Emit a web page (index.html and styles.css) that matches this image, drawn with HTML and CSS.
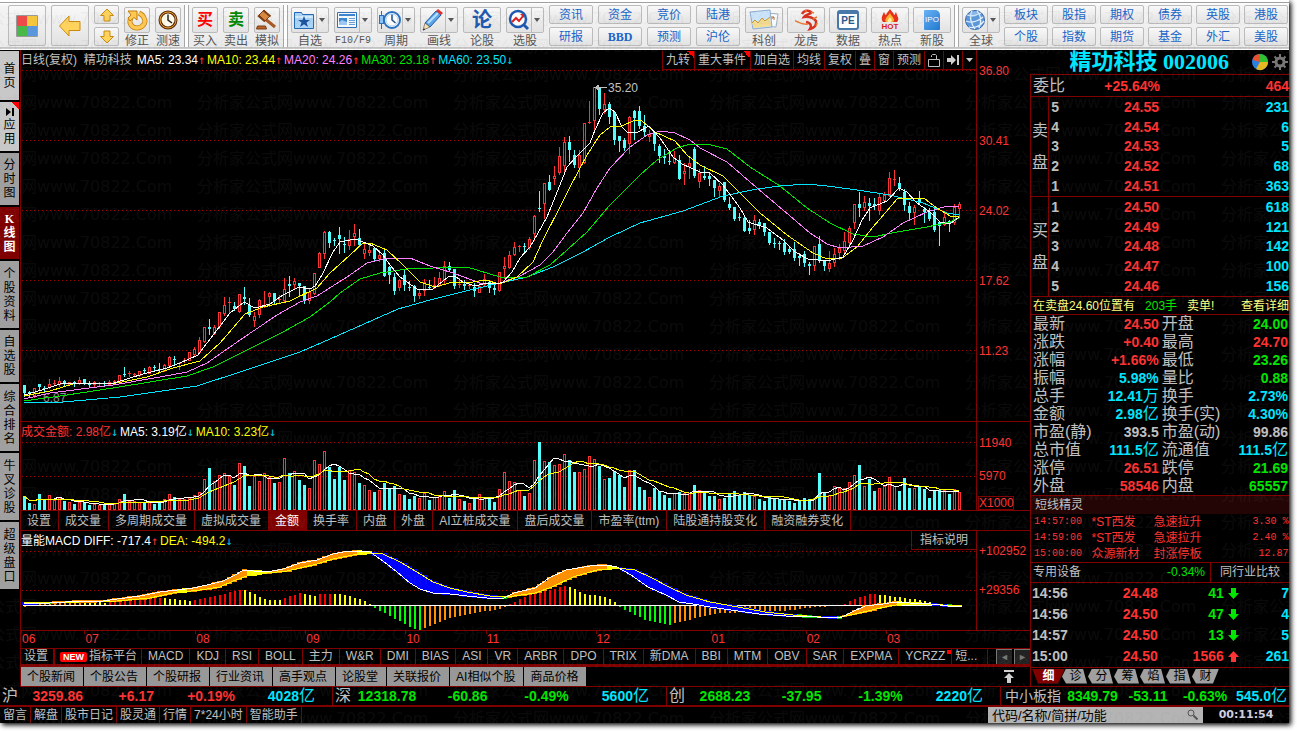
FILE: index.html
```html
<!DOCTYPE html>
<html lang="zh-CN">
<head>
    <meta charset="UTF-8">
    <meta name="viewport" content="width=device-width, initial-scale=1.0">
    <title>精功科技 002006</title>
    <link rel="stylesheet" href="styles.css">
</head>
<body>
<div class="app">
    <!-- Toolbar -->
    <header class="toolbar">
        <div class="group">
            <button class="big" aria-label="菜单"><svg width="24" height="24" viewBox="0 0 24 24"><path fill="#fff" stroke="#999" d="M1.500 1.500h21v21h-21z"/><path fill="#f04848" d="M2 2h10v10H2z"/><path fill="#f8c83c" d="M12 2h10v10H12z"/><path fill="#48b848" d="M2 12h10v10H2z"/><path fill="#5a96dc" d="M12 12h10v10H12z"/></svg></button>
            <button class="big" aria-label="返回"><svg width="24" height="24" viewBox="0 0 24 24"><path fill="#ffd35c" stroke="#c98a10" stroke-linejoin="round" d="M1.500 12 11 2v5.500h11v9H11V22z"/></svg></button>
            <div class="stack">
                <button class="small" aria-label="上"><svg width="16" height="14" viewBox="0 0 16 14"><path fill="#ffd35c" stroke="#c98a10" d="M8 1 14.500 7.500h-3.500V13H5V7.500H1.500z"/></svg></button>
                <button class="small" aria-label="下"><svg width="16" height="14" viewBox="0 0 16 14"><path fill="#ffd35c" stroke="#c98a10" d="M8 13 1.500 6.500H5V1h6v5.500h3.500z"/></svg></button>
            </div>
            <button class="tool narrow"><span class="face"><svg width="22" height="22" viewBox="0 0 22 22"><path fill="none" stroke="#c07c10" stroke-width="5" d="M5 9c-3 5 1 10 6 10s10-5 7-10c-1-3-3-4-5-5"/><path fill="none" stroke="#ffc850" stroke-width="3.500" d="M5 9c-3 5 1 10 6 10s10-5 7-10c-1-3-3-4-5-5"/><path fill="#ffc850" stroke="#c07c10" d="M2 2h9v9L8 8.500 4 12 2 9l3-3z"/></svg></span><span>修正</span></button>
            <button class="tool narrow"><span class="face"><svg width="20" height="20" viewBox="0 0 20 20"><circle cx="10" cy="10" r="8" fill="#fffbe8" stroke="#5a2c08" stroke-width="3"/><circle cx="10" cy="10" r="8" fill="none" stroke="#f0a030"/><path fill="none" stroke="#222" stroke-width="1.500" d="M10 4.500V10l4 3"/></svg></span><span>测速</span></button>
        </div>
        <i class="sep"></i>
        <div class="group">
            <button class="tool narrow"><span class="face glyph buy">买</span><span>买入</span></button>
            <button class="tool narrow"><span class="face glyph sell">卖</span><span>卖出</span></button>
            <button class="tool narrow"><span class="face"><svg width="22" height="22" viewBox="0 0 22 22"><path stroke="#a85820" stroke-width="3" d="m8 9 11 9"/><path fill="#d88840" stroke="#7c3c10" d="m8 1 6 6-5 5-6-6z"/><path stroke="#7c3c10" stroke-width="2" d="m7.500 1.500 7 6M2 6.500l7 6"/><path fill="#b86428" stroke="#7c3c10" d="M1.500 17h8l1 3h-10z"/></svg></span><span>模拟</span></button>
        </div>
        <i class="sep"></i>
        <div class="group">
            <button class="tool"><span class="face drop"><svg width="22" height="22" viewBox="0 0 22 22"><path fill="#a8d4f8" stroke="#2868b0" d="M1.500 3.500h7l1 2h11v14h-19z"/><path fill="#d4ecff" d="M2 7h18v2H2z"/><path fill="#1c509c" d="m11 7 1.500 4H17l-3.500 2.500L15 18l-4-2.700L7 18l1.500-4.500L5 11h4.500z"/></svg></span><span>自选</span></button>
            <button class="tool"><span class="face drop"><svg width="22" height="22" viewBox="0 0 22 22"><path fill="#f4faff" stroke="#3070b8" d="M1.500 3.500h19v15h-19z"/><path fill="#3c84d0" d="M3 5h16v2H3zM3 9h8v7H3z"/><path stroke="#6aa0d8" d="M13 9.500h6M13 11.500h6M13 13.500h6M13 15.500h6"/><path fill="#9cc8f4" d="M3 13l3-2 5 2v3H3z"/></svg></span><span class="mono">F10/F9</span></button>
            <button class="tool"><span class="face drop"><svg width="22" height="22" viewBox="0 0 22 22"><path fill="#2870c0" d="M2 2h1v18H2zM0 6h5v9H0z"/><path fill="#8cc4f8" d="M1 7h3v7H1z"/><circle cx="13" cy="11" r="8" fill="#fff" stroke="#2870c0" stroke-width="2"/><circle cx="13" cy="11" r="6" fill="none" stroke="#a8d0f4"/><path fill="none" stroke="#1c4c90" stroke-width="1.500" d="M13 5.500V11l3.500 3"/></svg></span><span>周期</span></button>
            <button class="tool"><span class="face drop"><svg width="22" height="22" viewBox="0 0 22 22"><path fill="#5ca4e8" stroke="#1c5ca8" d="M3 14 14 2l5 4L8 18z"/><path stroke="#b8e0ff" stroke-width="2" d="M6 14 16 4"/><path fill="#e03030" d="m14 2 2-2 5 4-2 2z"/><path fill="#f8e0b0" stroke="#444" stroke-width=".6" d="m3 14 5 4-7 3z"/><path stroke="#222" d="m1 21 2-1"/></svg></span><span>画线</span></button>
            <button class="tool"><span class="face glyph lun">论</span><span>论股</span></button>
            <button class="tool"><span class="face drop"><svg width="22" height="22" viewBox="0 0 22 22"><circle cx="10" cy="10" r="8" fill="#fff" stroke="#1c58b0" stroke-width="2.500"/><path stroke="#1c58b0" stroke-width="3" d="m16 16 4 4"/><path fill="none" stroke="#d82020" stroke-width="2" d="m4 13 4-4 3 3 4-5"/><path fill="#d82020" d="M12 5h4v4z"/></svg></span><span>选股</span></button>
            <div class="stack"><button class="pair">资讯</button><button class="pair">研报</button></div>
            <div class="stack"><button class="pair">资金</button><button class="pair latin">BBD</button></div>
            <div class="stack"><button class="pair">竞价</button><button class="pair">预测</button></div>
            <div class="stack"><button class="pair">陆港</button><button class="pair">沪伦</button></div>
            <button class="tool"><span class="face"><svg width="30" height="22" viewBox="0 0 30 22"><path fill="#f8fcff" stroke="#a0b0c0" d="m17 4 12 1-2 13-12-1z"/><path fill="none" stroke="#b87040" d="m18 13 7-5m-3 0h3v3"/><path fill="#cce4fa" stroke="#8cacd0" d="m1 3 20-2 2 17-19 2z"/><path fill="#f4dc90" d="m3 14 3-3 3 3 4-5 3 3 5-4 1 9-17 2z"/><path fill="none" stroke="#c89830" d="m3 14 3-3 3 3 4-5 3 3 5-4"/></svg></span><span>科创</span></button>
        </div>
        <div class="group tight">
            <button class="tool"><span class="face"><svg width="26" height="22" viewBox="0 0 26 22"><path fill="none" stroke="#d83020" stroke-width="2.500" d="M9 5c2-4 7-4 9-2 1 2-5 2-7 5 5-1 10 1 12 4 1 4-2 7-6 8 2-3 1-6-4-7"/><path fill="none" stroke="#e87830" stroke-width="1.500" d="M2 12c3 0 5 4 13 3M12 1l2 2M18 3l3 1M20 10l4-2M23 17l1-3"/></svg></span><span>龙虎</span></button>
            <button class="tool"><span class="face"><span class="pe">PE</span></span><span>数据</span></button>
            <button class="tool"><span class="face hot"><svg width="18" height="14" viewBox="0 0 18 14"><path fill="#e83018" d="M2 13C-1 9 2 6 3 3c1 2 1 3 2 3 1-3 3-4 4-6 2 3 4 4 4 6 1 0 1-2 2-3 1 4 4 7 1 10z"/><path fill="#ffb030" d="M5 13c-2-3 1-5 4-9 2 4 6 6 3 9z"/><path fill="#fff0a0" d="M7 13c-1-2 1-3 2-5 1 2 3 3 1 5z"/></svg><b>HOT</b></span><span>热点</span></button>
            <button class="tool"><span class="face"><span class="ipo">IPO</span></span><span>新股</span></button>
        </div>
        <i class="sep"></i>
        <div class="group tight">
            <button class="tool"><span class="face drop"><svg width="22" height="22" viewBox="0 0 22 22"><circle cx="11" cy="11" r="9.500" fill="#5c98dc" stroke="#3468a8"/><path fill="none" stroke="#e4f2ff" stroke-width="1.300" d="M3 6c5 2 12-1 14-2M2 12c6 3 14-1 17-4M5 18c6 2 12-2 15-6M8 2c-3 5-1 13 3 18M13 2c4 4 5 11 2 17"/><path fill="#b8d8f8" fill-opacity=".5" d="M4 6c2-4 9-5 12-2-3 4-9 5-12 2z"/></svg></span><span>全球</span></button>
            <div class="stack"><button class="pair">板块</button><button class="pair">个股</button></div>
            <div class="stack"><button class="pair">股指</button><button class="pair">指数</button></div>
            <div class="stack"><button class="pair">期权</button><button class="pair">期货</button></div>
            <div class="stack"><button class="pair">债券</button><button class="pair">基金</button></div>
            <div class="stack"><button class="pair">英股</button><button class="pair">外汇</button></div>
            <div class="stack"><button class="pair">港股</button><button class="pair">美股</button></div>
        </div>
    </header>

    <main class="main">
        <!-- Left navigation -->
        <nav class="side">
            <button class="light">首页</button>
            <button class="light corner"><svg width="8" height="8" viewBox="0 0 8 8"><path d="M0 0l5 4-5 4zM6 0h2v8H6z"/></svg>应用</button>
            <button>分时图</button>
            <button class="active">K线图</button>
            <button class="tall">个股资料</button>
            <button>自选股</button>
            <button class="tall">综合排名</button>
            <button class="tall">牛叉诊股</button>
            <button class="tall">超级盘口</button>
        </nav>

        <div class="center">
            <!-- Price -->
            <section class="pane">
                <div class="plot">
                    <div class="head">
                        <span class="name">日线(复权)&nbsp; 精功科技</span>
                        <span class="w">MA5: 23.34<i class="up">↑</i></span>
                        <span class="y">MA10: 23.44<i class="up">↑</i></span>
                        <span class="m">MA20: 24.26<i class="up">↑</i></span>
                        <span class="g">MA30: 23.18<i class="up">↑</i></span>
                        <span class="c">MA60: 23.50<i class="down">↓</i></span>
                        <div class="actions">
                            <button class="corner">九转</button><button class="corner">重大事件</button><button>加自选</button><button>均线</button><button>复权</button><button>叠</button><button>窗</button><button>预测</button><button aria-label="锁定"><svg width="12" height="14" viewBox="0 0 12 14"><path fill="none" stroke="#c0c0c0" d="M.5 6.500h11v7H.5zM3.500 4V2.500l1-1h3l1 1v4"/></svg></button><button aria-label="最新"><svg width="12" height="12" viewBox="0 0 12 12"><path fill="#d0d0d0" d="M0 4h4V1l5 5-5 5V8H0zM10 1h2v10h-2z"/></svg></button><button class="more" aria-label="更多"><svg width="7" height="4" viewBox="0 0 7 4"><path fill="#d0d0d0" d="M0 0h7L3.500 4z"/></svg></button>
                        </div>
                    </div>
                    <svg class="chart" id="price" height="351" viewBox="21 70 955 351" preserveAspectRatio="none"></svg>
                </div>
                <ul class="axis price-axis"><li>36.80</li><li>30.41</li><li>24.02</li><li>17.62</li><li>11.23</li></ul>
            </section>

            <!-- Turnover -->
            <section class="pane">
                <div class="plot">
                    <div class="head">
                        <span class="r">成交金额: 2.98亿<i class="down">↓</i></span>
                        <span class="w">MA5: 3.19亿<i class="down">↓</i></span>
                        <span class="y">MA10: 3.23亿<i class="down">↓</i></span>
                    </div>
                    <svg class="chart" id="volume" height="69" viewBox="21 441 955 69" preserveAspectRatio="none"></svg>
                </div>
                <ul class="axis volume-axis"><li>11940</li><li>5970</li><li class="times">X1000</li></ul>
            </section>
            <div class="tabs volume-tabs">
                <button>设置</button><button>成交量</button><button>多周期成交量</button><button>虚拟成交量</button><button class="active">金额</button><button>换手率</button><button>内盘</button><button>外盘</button><button>AI立桩成交量</button><button>盘后成交量</button><button>市盈率(ttm)</button><button>陆股通持股变化</button><button>融资融券变化</button>
            </div>

            <!-- MACD -->
            <section class="pane">
                <div class="plot">
                    <div class="head">
                        <span class="w">量能MACD DIFF: -717.4<i class="up">↑</i></span>
                        <span class="y">DEA: -494.2<i class="down">↓</i></span>
                        <button class="explain">指标说明</button>
                    </div>
                    <svg class="chart" id="macd" height="80" viewBox="21 550 955 80" preserveAspectRatio="none"></svg>
                </div>
                <ul class="axis macd-axis"><li>+102952</li><li>+29356</li></ul>
            </section>
            <div class="months" id="months"></div>

            <div class="tabs indicator-tabs">
                <div class="list">
                    <button class="first">设置</button><button class="new"><em>NEW</em>指标平台</button><button>MACD</button><button>KDJ</button><button>RSI</button><button>BOLL</button><button>主力</button><button>W&amp;R</button><button>DMI</button><button>BIAS</button><button>ASI</button><button>VR</button><button>ARBR</button><button>DPO</button><button>TRIX</button><button>新DMA</button><button>BBI</button><button>MTM</button><button>OBV</button><button>SAR</button><button>EXPMA</button><button class="dot">YCRZZ</button><button class="last">短...</button>
                </div>
                <button class="scroll" aria-label="向左">◄</button><button class="scroll" aria-label="向右">►</button>
            </div>
            <div class="news">
                <button>个股新闻</button><button>个股公告</button><button>个股研报</button><button>行业资讯</button><button>高手观点</button><button>论股堂</button><button>关联报价</button><button>AI相似个股</button><button>商品价格</button>
                <svg width="12" height="13" viewBox="0 0 12 13"><path fill="#d0d0d0" d="M1 0h10v2H1zM6 3l5 5H8v5H4V8H1z"/></svg>
            </div>
        </div>

        <!-- Quote panel -->
        <aside class="quote">
            <h1>精功科技 002006
                <svg width="38" height="18" viewBox="0 0 38 18"><circle cx="9" cy="9" r="8" fill="#2c80e0"/><path fill="#30c030" d="M9 9V1a8 8 0 0 1 8 8z"/><path fill="#e8b820" d="M9 9h8a8 8 0 0 1-12 7z"/><path fill="#e85030" d="M9 9 1.500 7A8 8 0 0 1 9 1z"/><circle cx="29" cy="9" r="4" fill="none" stroke="#777" stroke-width="3"/><path stroke="#777" stroke-width="2" d="M29 1v3M29 14v3M21 9h3M34 9h3M23.500 3.500l2 2M32.500 12.500l2 2M34.500 3.500l-2 2M25.500 12.500l-2 2"/></svg>
            </h1>
            <div class="ratio"><span>委比</span><b class="r">+25.64%</b><b class="r">464</b></div>
            <div class="book">
                <div class="side-name">卖盘</div>
                <table>
                    <tr><th>5</th><td>24.55</td><td>231</td></tr>
                    <tr><th>4</th><td>24.54</td><td>6</td></tr>
                    <tr><th>3</th><td>24.53</td><td>5</td></tr>
                    <tr><th>2</th><td>24.52</td><td>68</td></tr>
                    <tr><th>1</th><td>24.51</td><td>363</td></tr>
                </table>
            </div>
            <div class="book">
                <div class="side-name">买盘</div>
                <table>
                    <tr><th>1</th><td>24.50</td><td>618</td></tr>
                    <tr><th>2</th><td>24.49</td><td>121</td></tr>
                    <tr><th>3</th><td>24.48</td><td>142</td></tr>
                    <tr><th>4</th><td>24.47</td><td>100</td></tr>
                    <tr><th>5</th><td>24.46</td><td>156</td></tr>
                </table>
            </div>
            <div class="tip"><span>在卖盘24.60位置有</span><span class="g">203手</span><span>卖单!</span><a href="#">查看详细</a></div>
            <table class="stats">
                <tr><th>最新</th><td class="r">24.50</td><th>开盘</th><td class="g">24.00</td></tr>
                <tr><th>涨跌</th><td class="r">+0.40</td><th>最高</th><td class="r">24.70</td></tr>
                <tr><th>涨幅</th><td class="r">+1.66%</td><th>最低</th><td class="g">23.26</td></tr>
                <tr><th>振幅</th><td class="c">5.98%</td><th>量比</th><td class="g">0.88</td></tr>
                <tr><th>总手</th><td class="c">12.41<span class="unit">万</span></td><th>换手</th><td class="c">2.73%</td></tr>
                <tr><th>金额</th><td class="c">2.98<span class="unit">亿</span></td><th>换手(实)</th><td class="c">4.30%</td></tr>
                <tr><th>市盈(静)</th><td>393.5</td><th>市盈(动)</th><td>99.86</td></tr>
                <tr><th>总市值</th><td class="c">111.5<span class="unit">亿</span></td><th>流通值</th><td class="c">111.5<span class="unit">亿</span></td></tr>
                <tr><th>涨停</th><td class="r">26.51</td><th>跌停</th><td class="g">21.69</td></tr>
                <tr><th>外盘</th><td class="r">58546</td><th>内盘</th><td class="g">65557</td></tr>
            </table>
            <h2>短线精灵</h2>
            <table class="radar">
                <tr><td>14:57:00</td><td>*ST西发</td><td>急速拉升</td><td>3.30 %</td></tr>
                <tr><td>14:59:06</td><td>*ST西发</td><td>急速拉升</td><td>2.40 %</td></tr>
                <tr><td>15:00:00</td><td>众源新材</td><td>封涨停板</td><td>12.87</td></tr>
            </table>
            <div class="sector"><span>专用设备</span><span class="g">-0.34%</span><button>同行业比较</button></div>
            <table class="ticks">
                <tr><td>14:56</td><td class="r">24.48</td><td class="g">41</td><td><svg width="11" height="11" viewBox="0 0 11 11"><path fill="#00e600" d="M3 0h5v5h3L5.500 11 0 5h3z"/></svg></td><td class="c">7</td></tr>
                <tr><td>14:56</td><td class="r">24.50</td><td class="g">47</td><td><svg width="11" height="11" viewBox="0 0 11 11"><path fill="#00e600" d="M3 0h5v5h3L5.500 11 0 5h3z"/></svg></td><td class="c">4</td></tr>
                <tr><td>14:57</td><td class="r">24.50</td><td class="g">13</td><td><svg width="11" height="11" viewBox="0 0 11 11"><path fill="#00e600" d="M3 0h5v5h3L5.500 11 0 5h3z"/></svg></td><td class="c">5</td></tr>
                <tr><td>15:00</td><td class="r">24.50</td><td class="r">1566</td><td><svg width="11" height="11" viewBox="0 0 11 11"><path fill="#ff3232" d="M5.500 0 11 6H8v5H3V6H0z"/></svg></td><td class="c">261</td></tr>
            </table>
            <div class="quote-tabs"><button class="active">细</button><button>诊</button><button>分</button><button>筹</button><button>焰</button><button>指</button><button>财</button></div>
        </aside>
    </main>

    <!-- Market indexes -->
    <div class="indexes">
        <div class="index"><span>沪</span><b class="r">3259.86</b><b class="r">+6.17</b><b class="r">+0.19%</b><b class="c">4028<span class="unit">亿</span></b></div>
        <div class="index"><span>深</span><b class="g">12318.78</b><b class="g">-60.86</b><b class="g">-0.49%</b><b class="c">5600<span class="unit">亿</span></b></div>
        <div class="index"><span>创</span><b class="g">2688.23</b><b class="g">-37.95</b><b class="g">-1.39%</b><b class="c">2220<span class="unit">亿</span></b></div>
        <div class="index wide"><span>中小板指</span><b class="g">8349.79</b><b class="g">-53.11</b><b class="g">-0.63%</b><b class="c">545.0<span class="unit">亿</span></b></div>
    </div>

    <footer class="status">
        <button>留言</button><button>解盘</button><button>股市日记</button><button>股灵通</button><button>行情</button><button>7*24小时</button><button>智能助手</button>
        <div class="search">
            <input type="text" placeholder="代码/名称/简拼/功能" aria-label="代码/名称/简拼/功能">
            <svg width="12" height="12" viewBox="0 0 12 12"><circle cx="4" cy="4" r="3" fill="none" stroke="#555"/><path stroke="#555" stroke-width="2" d="m6.500 6.500 4 4"/></svg>
        </div>
        <time>00:11:54</time>
    </footer>

    <svg class="watermark" aria-hidden="true">
        <defs><pattern id="mark" x="197" y="4" width="256" height="28" patternUnits="userSpaceOnUse"><text x="0" y="20">分析家公式网www.70822.Com</text></pattern></defs>
        <rect width="100%" height="100%" fill="url(#mark)"/>
    </svg>
</div>
<script src="chart.js"></script>
</body>
</html>
```
FILE: styles.css
```css
/* Global styles */
* {
    box-sizing: border-box;
}
body {
    margin: 0;
    padding: 0 8px 8px 0;
    background: #fff;
    color: #c0c0c0;
    font: 12px/14px "Liberation Sans", "Noto Sans CJK SC", sans-serif;
}
button {
    margin: 0;
    padding: 0;
    border: 0;
    background: none;
    color: inherit;
    font: inherit;
    white-space: nowrap;
    cursor: pointer;
}
svg {
    display: block;
}
i, em {
    font-style: normal;
}
table {
    border-collapse: collapse;
}
th, td {
    padding: 0;
}
.app {
    position: relative;
    overflow: clip;
    overflow-clip-margin: 8px;
    background: #000;
    box-shadow: 2px 2px 5px #000;
}
.w { color: #fff; }
.y { color: #ff0; }
.m { color: #ff80ff; }
.g { color: #00e600; }
.c { color: #00e6ff; }
.r { color: #ff3232; }
.unit {
    font-size: 16px;
    font-weight: normal;
}

/* Toolbar */
.toolbar {
    display: flex;
    height: 50px;
    padding: 5px 0 0 8px;
    overflow: hidden;
    background: linear-gradient(#fff 2px, #a0a0a0 2px, #a0a0a0 3px, #fff 3px, #f4f4f4 6px, #ebebeb 47px, #999 48px, #fff 49px);
    color: #555;
}
.group {
    display: flex;
    flex: none;
    gap: 5px;
}
.group.tight {
    gap: 4px;
}
.group + .tight {
    margin-left: 4px;
}
.sep {
    flex: none;
    width: 5px;
    height: 42px;
    margin: 0 3px;
    border: solid #a8a8a8;
    border-width: 0 1px;
    background: #fff;
}
.big, .small, .face, .pair {
    display: flex;
    align-items: center;
    justify-content: center;
    border: 1px solid #bbb;
    border-radius: 2px;
    background: linear-gradient(#f8f8f8, #e2e2e2);
}
.big {
    width: 38px;
    height: 41px;
}
.stack {
    display: flex;
    flex-direction: column;
    gap: 3px;
}
.small {
    width: 25px;
    height: 19px;
}
.tool {
    width: 38px;
    text-align: center;
}
.tool.narrow {
    width: 26px;
}
.tool > span {
    display: flex;
    justify-content: center;
}
.tool > .face {
    height: 26px;
    margin-bottom: 1px;
}
.tool .mono {
    font: 10px/14px "Liberation Mono", monospace;
}
.tool > .drop {
    justify-content: flex-start;
    gap: 2px;
    padding-left: 1px;
    background: linear-gradient(#bbb, #bbb) 24px 0 / 1px 100% no-repeat, linear-gradient(#f8f8f8, #e2e2e2);
}
.drop::after {
    content: "";
    margin-left: 2px;
    border: solid transparent;
    border-width: 4px 3px 0;
    border-top-color: #555;
}
.glyph {
    font-size: 16px;
    font-weight: bold;
}
.buy { color: #f00; }
.sell { color: #080; }
.lun {
    color: #1c58b0;
    font-size: 20px;
}
.pair {
    width: 44px;
    height: 19px;
    color: #1864c8;
}
.latin {
    font: bold 12px/14px "Liberation Serif", serif;
}
.pe {
    width: 22px;
    padding: 1px 0;
    border: 2px solid #4878a8;
    border-top-width: 4px;
    border-radius: 3px;
    background: #fff;
    color: #285890;
    font: bold 10px/12px "Liberation Sans", sans-serif;
}
.face.hot {
    flex-direction: column;
    color: #d82020;
    font-size: 8px;
    line-height: 8px;
}
.ipo {
    width: 16px;
    border-radius: 1px 5px 1px 1px;
    background: linear-gradient(135deg, #68b4f4, #2078d0);
    color: #fff;
    font-size: 8px;
    line-height: 20px;
}

/* Main area */
.main {
    display: grid;
    grid-template-columns: 20px minmax(0, 1fr) 259px;
}
.side {
    display: flex;
    flex-direction: column;
    gap: 2px;
    padding: 1px 1px 0 0;
}
.side button {
    display: flex;
    flex-direction: column;
    align-items: center;
    justify-content: center;
    height: 52px;
    padding: 0 3px;
    background: #a0a0a0;
    color: #000;
    white-space: normal;
    word-break: break-all;
}
.side .tall {
    height: 67px;
}
.side .light {
    height: 49px;
    background: #c8c8c8;
}
.side .active {
    background: #800000;
    color: #fff;
    font-family: "Liberation Serif", "Noto Sans CJK SC", serif;
    font-weight: bold;
}
.side svg {
    margin-bottom: 2px;
}
.corner {
    background-image: linear-gradient(45deg, transparent 50%, #f00 50%) !important;
    background-position: top right !important;
    background-repeat: no-repeat !important;
    background-size: 7px 7px !important;
}
.center {
    min-width: 0;
    border: solid #800000;
    border-width: 0 0 1px 1px;
}
.pane {
    display: grid;
    grid-template-columns: minmax(0, 1fr) 53px;
    border-bottom: 1px solid #800000;
}
.plot {
    border-right: 1px solid #800000;
}
.head {
    display: flex;
    align-items: center;
    gap: 3px;
    height: 19px;
    white-space: nowrap;
}
.head:has(.actions) {
    height: 20px;
}
.name {
    margin-right: 2px;
    color: #c0c0c0;
}
.up { color: #ff3232; }
.down { color: #00c8e6; }
.head i {
    display: inline-block;
    width: 6px;
    font: 12px/12px "DejaVu Sans Mono", monospace;
}
.actions {
    display: flex;
    height: 19px;
    margin: 1px 0 0 auto;
    border-bottom: 1px solid #800000;
}
.actions button {
    min-width: 14px;
    padding: 0 3px;
    border-left: 1px solid #800000;
}
.actions .corner {
    padding-right: 4px;
}
.explain {
    align-self: stretch;
    margin-left: auto;
    padding: 0 8px;
    border: solid #800000;
    border-width: 0 0 1px 1px;
}
.chart {
    width: 100%;
    shape-rendering: crispEdges;
}
.axis {
    margin: 0;
    padding: 0 0 0 2px;
    list-style: none;
    color: #ff3232;
}
.price-axis {
    padding-top: 14px;
}
.price-axis li {
    height: 70px;
}
.price-axis li:last-child {
    height: 14px;
}
.volume-axis {
    padding-top: 14px;
}
.volume-axis li {
    height: 33px;
}
.volume-axis .times {
    height: 14px;
    margin: -6px 16px 0 -1px;
    border: 1px solid #800000;
    line-height: 12px;
}
.macd-axis {
    padding-top: 13px;
}
.macd-axis li {
    height: 39px;
}
.months {
    display: flex;
    height: 17px;
    padding-right: 53px;
    color: #ff3232;
    line-height: 16px;
}
.months span {
    padding-left: 1px;
    background: linear-gradient(#800000, #800000) 0 0 / 1px 3px no-repeat;
}

/* Tab rows */
.tabs {
    display: flex;
    border-bottom: 1px solid #800000;
}
.tabs button {
    height: 19px;
    padding: 0 7px 0 6px;
    border-right: 1px solid #800000;
}
.tabs .active {
    background: #800000;
    color: #fff;
}
.indicator-tabs {
    border: solid #800000;
    border-width: 1px 0 3px;
}
.list {
    display: flex;
    flex: 1;
    min-width: 0;
    overflow: hidden;
}
.indicator-tabs button {
    height: 15px;
    padding: 0 6px;
    line-height: 15px;
}
.indicator-tabs .first {
    padding: 0 5px 0 3px;
    border-right-width: 2px;
}
.indicator-tabs .new {
    padding: 0 4px 0 5px;
}
.indicator-tabs .last {
    padding: 0 10px 0 3px;
}
.indicator-tabs em {
    margin-right: 2px;
    padding: 0 3px;
    border-radius: 2px;
    background: #f00;
    color: #fff;
    font-size: 9px;
    font-weight: bold;
}
.indicator-tabs .dot {
    background: linear-gradient(#f00, #f00) 100% 1px / 4px 4px no-repeat;
}
.indicator-tabs .scroll {
    width: 16px;
    margin-left: 2px;
    padding: 0;
    border: 1px solid #777;
    border-width: 1px 0 0 1px;
    background: #222;
    color: #777;
    font-size: 9px;
}
.news {
    display: flex;
    align-items: center;
    gap: 1px;
}
.news button {
    height: 19px;
    padding: 0 8px 0 6px;
    background: #989898;
    color: #000;
}
.news svg {
    margin: 0 15px 0 auto;
}

/* Quote panel */
.quote {
    display: flex;
    flex-direction: column;
    border-bottom: 1px solid #800000;
}
.quote > * {
    border-left: 1px solid #800000;
}
.quote h1 {
    display: flex;
    align-items: center;
    justify-content: flex-end;
    gap: 22px;
    height: 24px;
    margin: 0;
    border-left: 0;
    color: #00e6ff;
    font: bold 22px/24px "Liberation Serif", "Noto Sans CJK SC", serif;
    white-space: nowrap;
}
.ratio, .book, .tip, .stats, .quote h2, .radar, .sector, .ticks, .quote-tabs {
    border-top: 1px solid #800000;
}
.ratio {
    display: grid;
    grid-template-columns: 32px 95px 1fr;
    height: 22px;
    padding-left: 2px;
    font-size: 14px;
    line-height: 22px;
    text-align: right;
}
.ratio span {
    font-size: 16px;
}
.book {
    display: flex;
    height: 100px;
}
.side-name {
    display: flex;
    align-items: center;
    width: 18px;
    padding: 0 1px;
    border-right: 1px solid #800000;
    font-size: 16px;
    line-height: 32px;
    word-break: break-all;
}
.book table {
    flex: 1;
    table-layout: fixed;
    font-size: 14px;
    font-weight: bold;
    text-align: right;
}
.book th {
    width: 10px;
}
.book td {
    color: #ff3232;
}
.book th + td {
    width: 100px;
}
.book td:last-child {
    color: #00e6ff;
}
.tip {
    display: flex;
    align-items: center;
    gap: 10px;
    height: 18px;
    padding-left: 2px;
    color: #ffff80;
    white-space: nowrap;
}
.tip a {
    margin-left: auto;
    color: inherit;
    text-decoration: none;
}
.stats {
    width: 100%;
    table-layout: fixed;
}
.stats th, .stats td {
    height: 18px;
    line-height: 18px;
}
.stats th {
    width: 60px;
    padding-left: 2px;
    font-size: 16px;
    font-weight: normal;
    text-align: left;
    white-space: nowrap;
}
.stats td {
    padding-right: 1px;
    font-size: 14px;
    font-weight: bold;
    text-align: right;
}
.quote h2 {
    height: 19px;
    margin: 0;
    padding-left: 4px;
    background: #240505;
    font-size: 12px;
    font-weight: normal;
    line-height: 18px;
}
.radar {
    width: 100%;
    border-top: 0;
    table-layout: fixed;
    color: #ff3232;
    white-space: nowrap;
}
.radar td {
    width: 62px;
    height: 16px;
}
.radar td:first-child {
    width: 61px;
    padding-left: 3px;
    font: 10px/16px "Liberation Mono", monospace;
}
.radar td:last-child {
    width: auto;
    font: 10px/16px "Liberation Mono", monospace;
    text-align: right;
}
.sector {
    display: grid;
    grid-template-columns: 1fr 1fr 79px;
    height: 20px;
    padding-left: 2px;
    line-height: 19px;
}
.sector .g {
    padding-right: 5px;
    text-align: right;
}
.sector button {
    border-left: 1px solid #800000;
}
.ticks {
    width: 100%;
    table-layout: fixed;
    font-size: 14px;
    font-weight: bold;
    text-align: right;
}
.ticks td {
    height: 21px;
}
.ticks td:first-child {
    padding-left: 1px;
    text-align: left;
}
.ticks td:nth-child(2) {
    width: 80px;
}
.ticks td:nth-child(3) {
    width: 66px;
}
.ticks td:nth-child(4) {
    width: 18px;
    padding-left: 4px;
}
.quote-tabs {
    display: flex;
    flex: 1;
    padding: 1px 0 0 1px;
}
.quote-tabs button {
    width: 29px;
    height: 15px;
    margin-right: -3px;
    background: #a0a0a0;
    clip-path: polygon(5px 0, 22px 0, 26px 15px, 5px 15px, 1px 8px);
    color: #000;
    line-height: 15px;
}
.quote-tabs button:last-child {
    clip-path: polygon(5px 0, 28px 0, 22px 15px, 5px 15px, 1px 8px);
}
.quote-tabs .active {
    width: 33px;
    margin-right: -4px;
    background: #800000;
    clip-path: polygon(0 0, 100% 0, 26px 100%, 6px 100%);
    color: #fff;
    font-weight: bold;
}

/* Index bar */
.indexes {
    display: grid;
    grid-template-columns: 333fr 334fr 334fr 288fr;
    border-bottom: 2px solid #800000;
}
.index {
    display: grid;
    grid-template-columns: 16px 65fr 71fr 81fr 80fr;
    height: 18px;
    padding: 0 17px 0 2px;
    border-right: 1px solid #800000;
    font-size: 14px;
    line-height: 18px;
    text-align: right;
    white-space: nowrap;
}
.index > span {
    font-size: 16px;
}
.index.wide {
    grid-template-columns: 58px 57fr 50fr 60fr 60fr;
    padding: 0 2px;
    border-right: 0;
}
.index.wide > span {
    font-size: 14px;
}

/* Status bar */
.status {
    display: flex;
    height: 16px;
}
.status button {
    padding: 0 3px;
    border-right: 1px solid #800000;
    line-height: 16px;
}
.search {
    display: flex;
    align-items: center;
    width: 215px;
    margin-left: auto;
    padding: 0 4px;
    background: #b4b4b4;
}
.search input {
    flex: 1;
    min-width: 0;
    height: 16px;
    padding: 0;
    border: 0;
    outline: 0;
    background: none;
    font: inherit;
    font-size: 13px;
}
.search input::placeholder {
    color: #000;
}
.status time {
    width: 86px;
    color: #d0d0e0;
    font: bold 11px/16px "DejaVu Sans", sans-serif;
    text-align: center;
}
.watermark {
    position: absolute;
    top: 0;
    left: 0;
    width: 100%;
    height: 100%;
    pointer-events: none;
}
.watermark text {
    fill: rgba(128, 128, 128, 0.08);
    font: 16px "DejaVu Sans", "Noto Sans CJK SC", sans-serif;
}
```
FILE: chart.js
```js
// [high, body top, body bottom, low, rising]
var candles = [
    [385,385,393,396,0],[391,392,394,396,0],[388,388,395,397,1],[384,384,387,390,0],[386,388,389,391,0],
    [379,384,387,388,1],[380,383,384,385,1],[377,381,384,386,1],[380,381,383,385,0],[382,382,384,385,1],
    [381,382,384,386,0],[377,380,383,384,1],[379,379,383,384,0],[381,383,385,386,0],[381,382,384,386,1],
    [382,383,384,385,1],[381,383,384,386,0],[380,382,384,385,1],[380,381,383,384,1],[375,375,381,381,1],
    [367,374,375,376,0],[371,373,374,376,1],[373,374,375,376,1],[371,371,375,376,1],[368,370,371,372,0],
    [366,367,373,373,1],[365,367,368,370,0],[363,369,370,372,0],[364,365,370,371,1],[356,357,365,365,1],
    [356,359,360,364,0],[362,363,364,369,1],[358,360,361,362,1],[352,352,360,360,1],[347,349,354,356,1],
    [337,340,352,353,1],[327,327,341,342,1],[319,327,329,334,0],[325,327,333,334,1],[312,312,326,328,1],
    [297,305,313,315,1],[297,302,303,313,1],[302,306,309,310,0],[294,294,311,312,1],[287,297,299,304,0],
    [298,305,315,316,0],[312,316,320,326,1],[299,300,314,317,1],[291,305,306,307,1],[292,293,296,306,1],
    [293,293,301,303,0],[295,299,300,303,1],[278,289,300,302,1],[276,284,286,296,0],[278,281,284,289,1],
    [283,283,286,295,0],[286,286,300,303,0],[288,292,300,303,1],[273,273,293,294,1],[252,253,267,267,1],
    [231,232,253,258,1],[231,232,243,247,0],[238,240,241,245,0],[227,235,239,253,0],[237,244,245,252,0],
    [230,239,245,249,1],[224,233,236,245,1],[229,238,245,246,0],[243,249,253,258,1],[243,250,252,255,1],
    [247,248,259,260,0],[250,255,258,261,1],[249,253,276,276,0],[266,267,275,283,0],[273,277,291,294,0],
    [279,280,287,290,1],[269,275,285,290,0],[281,287,288,290,0],[285,286,296,301,0],[289,293,295,298,1],
    [279,282,290,295,1],[280,287,288,289,0],[277,285,287,288,1],[272,278,285,286,1],[261,266,279,283,1],
    [262,266,270,271,0],[269,269,286,288,0],[278,284,285,287,1],[280,284,286,289,0],[282,285,286,288,1],
    [283,287,291,296,0],[283,286,292,292,1],[274,279,284,286,1],[280,282,288,292,0],[284,288,290,294,0],
    [272,272,290,291,1],[257,266,268,278,1],[251,255,267,268,1],[242,247,254,255,1],[245,246,247,251,1],
    [243,246,247,251,0],[237,239,247,249,1],[215,216,233,240,1],[191,208,209,211,0],[183,183,203,218,1],
    [175,182,190,190,0],[166,176,178,184,1],[147,156,172,174,1],[137,142,165,172,1],[136,142,150,161,0],
    [150,155,165,167,0],[150,155,167,177,1],[123,123,162,163,1],[101,122,123,123,1],[87,87,120,130,1],
    [87,88,109,114,0],[93,104,109,113,1],[102,104,117,123,0],[111,112,140,144,0],[136,136,141,151,0],
    [138,140,148,150,0],[116,117,143,153,1],[110,111,118,139,0],[106,111,126,128,0],[115,126,132,136,0],
    [130,134,136,141,1],[132,133,144,150,0],[144,146,156,162,0],[149,156,158,163,0],[150,161,162,164,0],
    [151,158,162,163,1],[155,160,179,179,0],[163,171,173,184,1],[157,163,166,178,1],[147,149,176,177,0],
    [169,173,181,187,1],[166,176,178,179,0],[172,176,179,185,0],[180,180,188,196,0],[183,186,190,197,1],
    [182,182,200,201,0],[197,204,208,209,0],[207,207,219,220,0],[213,217,218,220,0],[216,218,231,231,0],
    [220,228,231,233,0],[215,220,229,234,1],[219,222,226,228,0],[223,223,232,235,0],[232,232,243,244,0],
    [238,243,244,247,0],[241,243,244,249,0],[239,243,252,254,0],[246,249,252,253,0],[242,249,258,260,0],
    [253,256,258,265,0],[251,254,263,266,0],[262,264,266,274,0],[246,246,265,270,1],[236,244,261,262,0],
    [260,260,266,270,0],[251,263,268,271,1],[248,254,262,266,1],[244,248,252,259,1],[232,241,250,252,1],
    [226,228,242,246,1],[204,204,222,228,1],[192,204,208,216,0],[196,202,207,210,1],[198,203,206,220,0],
    [198,204,206,209,0],[193,197,210,214,1],[192,195,200,202,1],[172,178,195,196,1],[170,179,180,185,1],
    [177,183,189,190,0],[189,192,205,210,0],[202,206,213,218,0],[205,207,212,224,1],[191,199,203,204,0],
    [207,209,212,222,0],[208,212,219,220,0],[208,212,230,231,0],[222,222,226,245,0],[213,217,224,225,1],
    [220,221,223,231,0],[204,207,222,224,1],[202,204,208,217,1]
];

// turnover bar heights
var volumes = [
    14,7,6,16,10,15,10,13,9,8,6,8,8,5,6,5,5,6,6,11,16,9,9,8,7,8,6,7,11,16,13,11,11,13,15,18,31,42,29,35,
    37,34,25,47,44,24,34,29,37,33,27,28,52,37,39,30,25,22,50,46,59,43,31,43,30,40,38,27,25,20,18,20,27,21,24,16,15,11,14,12,
    17,10,13,14,19,12,20,11,9,7,12,16,13,11,8,21,38,29,28,20,14,17,50,68,49,48,45,46,56,50,38,38,41,54,51,44,31,32,39,35,
    23,40,40,23,20,13,22,19,15,12,17,18,17,17,25,20,18,14,14,11,12,16,19,15,18,15,14,11,9,13,11,11,10,9,7,10,12,11,12,37,
    17,15,24,22,22,28,35,45,24,31,19,22,24,33,24,19,32,22,22,23,21,12,20,20,20,16,21,18
];

// moving averages, x y pairs
var averages = {
    '#00e6ff': '24,402 63,402 120,397 197,386 240,372 300,352 330,339 398,309 430,300 470,290 500,283 527,277 553,267 583,252 610,237 640,223 683,211 723,196 757,189 780,186 807,184 827,186 857,190 890,195 923,203 947,213 959,215',
    '#00e600': '24,401 67,395 113,388 187,376 213,367 247,350 283,332 310,317 330,302 340,293 360,279 380,273 407,269 433,268 453,267 467,267 500,277 527,277 550,265 567,250 587,232 610,205 640,175 657,160 677,148 690,144 707,144 727,149 750,167 780,186 807,208 830,223 853,234 873,237 897,232 927,227 950,222 959,218',
    '#ff80ff': '24,399 50,393 113,385 160,377 187,372 207,363 240,340 277,315 300,302 317,296 347,277 367,263 383,259 410,258 430,266 453,273 480,283 500,283 520,276 540,265 553,252 567,233 583,213 597,188 610,168 630,147 647,135 660,131 675,133 690,140 700,148 727,162 757,188 783,210 810,233 827,244 840,248 863,246 883,237 903,223 927,212 947,206 959,207',
    '#ffff00': '24,396 50,391 73,384 117,383 147,377 173,368 200,361 220,343 245,314 263,307 290,301 317,288 330,273 350,255 363,243 370,243 387,250 403,265 420,282 435,287 453,282 467,283 485,280 500,284 517,277 533,262 543,240 560,207 570,187 587,155 600,135 610,127 622,126 635,120 642,121 655,132 675,141 687,155 700,165 723,176 740,193 760,213 787,235 813,253 827,259 842,258 857,247 873,227 898,198 925,199 937,208 950,216 959,217',
    '#ffffff': '24,395 42,390 63,383 114,383 143,374 167,368 180,363 198,355 207,343 217,330 230,313 244,302 255,308 270,304 283,295 299,287 310,289 315,286 322,275 333,252 340,242 355,239 363,242 373,246 383,255 390,265 400,277 417,289 433,289 448,277 455,276 463,282 475,286 487,283 497,284 503,282 512,272 520,258 530,247 538,233 547,217 560,185 567,167 575,158 583,150 590,143 595,130 603,113 609,108 615,112 622,127 628,133 638,132 649,126 660,138 673,157 682,164 700,172 710,173 723,185 740,208 748,222 767,228 783,240 795,252 808,259 827,261 843,257 853,240 862,220 870,208 887,201 899,188 907,192 917,203 930,212 940,222 950,224 959,217'
};

var diff = '24,604 50,603 80,601 103,601 117,599 140,596 160,592 177,590 193,588 207,585 223,581 233,576 244,570 253,571 267,572 283,569 300,563 317,560 333,554 343,552 357,551 370,552 383,561 397,572 410,583 420,589 433,593 450,594 467,596 487,598 504,598 514,593 535,588 549,578 566,570 590,566 604,565 617,567 631,575 648,587 666,595 679,602 693,604 710,607 731,610 759,614 786,616 817,617 840,618 852,612 865,606 883,604 895,602 910,603 931,604 948,606 962,606';
var dea = '24,603 80,602 117,601 150,598 173,593 200,590 220,587 233,581 250,575 267,573 287,571 300,568 317,564 333,559 353,555 370,553 383,554 400,562 417,572 433,582 450,588 467,592 490,596 507,597 535,593 552,587 573,577 597,570 617,568 635,570 652,578 669,587 686,595 710,602 738,607 765,612 793,615 821,617 840,617 855,614 872,610 889,606 903,604 924,604 962,606';
var histogram = '24,-1 80,5 103,2 130,5 160,7 190,4 213,9 240,15 245,15 265,5 280,5 298,12 315,9 320,11 340,11 363,5 368,1 374,-2 413,-23 420,-24 450,-12 473,-7 500,-3 508,0 514,3 530,11 565,19 568,18 585,11 605,8 614,3 617,0 624,-4 645,-14 669,-19 672,-18 700,-11 720,-7 780,-5 800,-3 815,-1 842,0 845,2 860,8 872,12 875,11 895,8 905,7 925,4 935,1 960,0';

var RED = '#ff0000', YELLOW = '#ffff00', GREEN = '#00ff00', ORANGE = '#ff9000', BLUE = '#0000ff', LEAF = '#00c800';
var ribbonColors = [[34, BLUE], [50, LEAF], [178, ORANGE], [186, YELLOW], [248, ORANGE], [265, YELLOW], [358, ORANGE], [370, YELLOW], [500, BLUE], [508, LEAF], [605, ORANGE], [617, YELLOW], [795, BLUE], [817, LEAF], [836, BLUE], [841, LEAF], [894, ORANGE], [925, YELLOW], [947, BLUE], [999, LEAF]];
var barColors = [[82, ORANGE], [105, YELLOW], [162, RED], [192, YELLOW], [242, RED], [281, YELLOW], [300, RED], [316, YELLOW], [330, RED], [369, YELLOW], [421, GREEN], [507, ORANGE], [566, RED], [618, YELLOW], [670, GREEN], [842, ORANGE], [874, RED], [999, YELLOW]];
var months = [['06', 63], ['07', 111], ['08', 110], ['09', 100], ['10', 80], ['11', 110], ['12', 115], ['01', 95], ['02', 80], ['03', 91]];

function rect(x, y, w, h, color) {
    return '<rect x="' + x + '" y="' + y + '" width="' + w + '" height="' + h + '" fill="' + color + '"/>';
}

function box(x, y, h) {
    return '<rect x="' + (x + 0.5) + '" y="' + (y + 0.5) + '" width="2" height="' + Math.max(h - 1, 1) + '" fill="#000" stroke="#ff3232"/>';
}

function line(points, color) {
    return '<polyline points="' + points + '" fill="none" stroke="' + color + '"/>';
}

function grid(y) {
    return '<path d="M22 ' + (y + 0.5) + 'H976" stroke="#a00000" stroke-dasharray="1 3"/>';
}

function label(x, y, text, color) {
    return '<text x="' + x + '" y="' + y + '" font-size="12" fill="' + color + '">' + text + '</text>';
}

// value of a polyline at x
function at(points, x) {
    var p = points.split(' ').map(function (s) { return s.split(',').map(Number); });
    for (var i = 1; i < p.length; i++) {
        if (x <= p[i][0]) {
            return p[i - 1][1] + (p[i][1] - p[i - 1][1]) * (x - p[i - 1][0]) / (p[i][0] - p[i - 1][0]);
        }
    }
    return p[p.length - 1][1];
}

function pick(ranges, x) {
    return ranges.find(function (r) { return x <= r[0]; })[1];
}

function drawPrice() {
    var out = [70, 140, 210, 280, 350].map(grid).join('');
    out += label(43, 402, '6.87', '#909090');
    candles.forEach(function (c, i) {
        var x = 24 + i * 5;
        var color = c[4] ? '#ff3232' : '#54ffff';
        out += rect(x, c[0], 1, c[3] - c[0] + 1, color);
        var h = c[2] - c[1] + 1;
        out += c[4] && h > 2 ? box(x - 1, c[1], h) : rect(x - 1, c[1], 3, Math.max(h - 1, 1), color);
    });
    for (var color in averages) {
        out += line(averages[color], color);
    }
    out += '<path d="M595 87.500h12M595 87.500l3-2v4z" stroke="#c0c0c0" fill="#c0c0c0"/>';
    out += label(608, 92, '35.20', '#c0c0c0');
    document.getElementById('price').innerHTML = out;
}

function volumeAverage(n) {
    return volumes.map(function (v, i) {
        var part = volumes.slice(Math.max(0, i - n + 1), i + 1);
        var sum = part.reduce(function (a, b) { return a + b; }, 0);
        return (24 + i * 5) + ',' + Math.round(510 - sum / part.length);
    }).join(' ');
}

function drawVolume() {
    var out = grid(442) + grid(476);
    volumes.forEach(function (v, i) {
        var x = 23 + i * 5;
        out += candles[i][4] ? box(x, 510 - v, v) : rect(x, 510 - v, 3, v, '#54ffff');
    });
    out += line(volumeAverage(5), '#ffffff') + line(volumeAverage(10), '#ffff00');
    document.getElementById('volume').innerHTML = out;
}

function drawMacd() {
    var bars = '', ribbon = '';
    for (var i = 0; i < candles.length; i++) {
        var x = 24 + i * 5;
        var v = Math.round(at(histogram, x));
        bars += rect(x, v > 0 ? 605 - v : 606, 2, Math.abs(v), pick(barColors, x));
        var a = Math.round(at(diff, x)), b = Math.round(at(dea, x));
        ribbon += rect(x - 2, Math.min(a, b) - 1, 5, Math.abs(a - b) + 2, pick(ribbonColors, x));
    }
    document.getElementById('macd').innerHTML = grid(551) + grid(590) + bars + rect(23, 605, 939, 1, '#fff') + ribbon + line(dea, YELLOW) + line(diff, '#fff');
}

drawPrice();
drawVolume();
drawMacd();
document.getElementById('months').innerHTML = months.map(function (m) {
    return '<span style="flex: ' + m[1] + ' 0 0">' + m[0] + '</span>';
}).join('');
```
